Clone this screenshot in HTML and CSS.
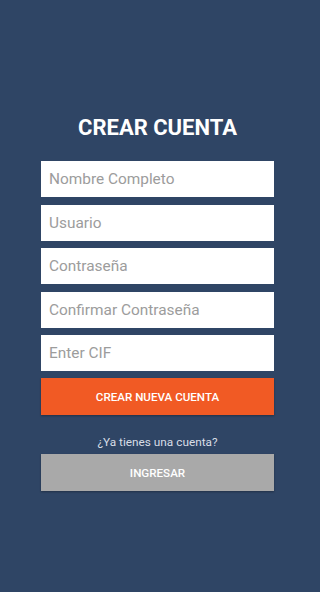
FILE: index.html
```html
<!DOCTYPE html>
<html lang="es">
<head>
<meta charset="utf-8">
<link rel="stylesheet" href="styles.css">
</head>
<body>
<main class="screen">
  <div class="form">
    <h1 class="title">CREAR CUENTA</h1>
    <div class="fields">
      <input class="field" type="text" placeholder="Nombre Completo">
      <input class="field" type="text" placeholder="Usuario">
      <input class="field" type="password" placeholder="Contraseña">
      <input class="field" type="password" placeholder="Confirmar Contraseña">
      <input class="field" type="text" placeholder="Enter CIF">
    </div>
    <button class="btn btn-primary">CREAR NUEVA CUENTA</button>
    <p class="hint">¿Ya tienes una cuenta?</p>
    <button class="btn btn-secondary">INGRESAR</button>
  </div>
</main>
</body>
</html>
```
FILE: styles.css
```css
* { box-sizing: border-box; }
html, body { margin: 0; padding: 0; }
html, body { background: #2f4565; }
body {
  font-family: Roboto, "Liberation Sans", sans-serif;
}
.screen {
  width: 100%;
  min-height: 592px;
  background: #2f4565;
  display: flex;
  justify-content: flex-start;
}
.form {
  width: 233px;
  margin-left: 41px;
  padding-top: 114px;
  display: flex;
  flex-direction: column;
}
.title {
  margin: 0;
  color: #ffffff;
  font-size: 22px;
  font-weight: 700;
  text-align: center;
  line-height: 28px;
}
.fields {
  margin-top: 19px;
  display: flex;
  flex-direction: column;
  gap: 7.5px;
}
.field {
  display: block;
  width: 100%;
  height: 36px;
  border: none;
  margin: 0;
  padding: 0 8px;
  background: #ffffff;
  font-family: Roboto, "Liberation Sans", sans-serif;
  font-size: 15.4px;
  color: #333;
  outline: none;
}
.field::placeholder { color: #9c9c9c; }
.btn {
  display: block;
  width: 100%;
  height: 37px;
  border: none;
  margin: 0;
  padding: 0;
  font-family: Roboto, "Liberation Sans", sans-serif;
  font-size: 11.6px;
  font-weight: 500;
  color: #ffffff;
  text-align: center;
  box-shadow: 0 1px 2px rgba(0,0,0,0.3);
}
.btn-primary {
  margin-top: 7px;
  background: #f15a24;
}
.hint {
  margin: 20px 0 0;
  text-align: center;
  color: #d8dde6;
  font-size: 11.8px;
  line-height: 15px;
}
.btn-secondary {
  margin-top: 4px;
  background: #a9a9a9;
}
```
